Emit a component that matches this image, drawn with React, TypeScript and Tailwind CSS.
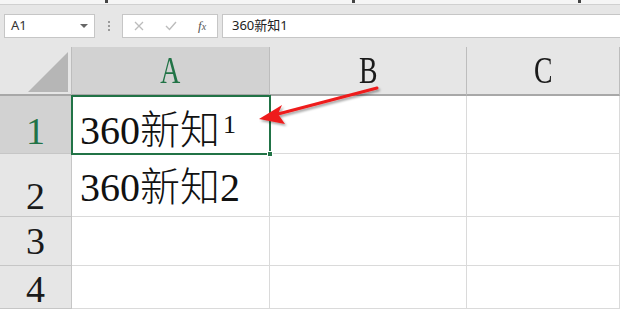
import React from 'react';

const serif = { fontFamily: '"Liberation Serif", "Noto Sans CJK SC", serif' };
const sans = { fontFamily: '"Noto Sans", "Noto Sans CJK SC", sans-serif' };

const RowHead: React.FC<{ n: number; active?: boolean; pb: string }> = ({ n, active, pb }) => (
  <div
    className={`flex items-end justify-center border-r border-b border-[#c6c6c6] text-[38px] leading-none ${pb} ${
      active ? 'bg-[#d2d2d2] text-[#217346]' : 'bg-[#e6e6e6] text-[#1a1a1a]'
    }`}
    style={serif}
  >
    {n}
  </div>
);

const ColHead: React.FC<{ label: string; active?: boolean }> = ({ label, active }) => (
  <div
    className={`flex items-end justify-center pb-[5px] border-r border-[#bdbdbd] border-b-2 border-b-[#a8a8a8] text-[37px] leading-none ${
      active ? 'bg-[#d2d2d2] text-[#217346]' : 'bg-[#e6e6e6] text-[#1a1a1a]'
    }`}
    style={serif}
  >
    <span className="inline-block scale-x-75">{label}</span>
  </div>
);

const Cell: React.FC<{ children?: React.ReactNode; pb?: string }> = ({ children, pb = '' }) => (
  <div className={`flex items-end border-r border-b border-[#dadada] bg-white pl-2 text-[40px] font-light leading-none text-[#111] ${pb}`} style={serif}>
    {children}
  </div>
);

export default function App() {
  return (
    <div className="relative w-[620px] h-[309px] overflow-hidden bg-white">
      {/* toolbar remnant */}
      <div className="relative h-[5px] bg-[#f5f5f5] border-b border-[#d0d0d0]">
        <span className="absolute left-[105px] top-0 h-[3px] w-[3px] bg-[#444]" />
        <span className="absolute left-[352px] top-0 h-[3px] w-[3px] bg-[#444]" />
        <span className="absolute left-[578px] top-0 h-[3px] w-[3px] bg-[#444]" />
      </div>

      {/* formula bar */}
      <div className="flex h-[42px] items-start bg-[#e6e6e6] pt-[9px] pl-1" style={sans}>
        <div className="flex h-6 w-[91px] items-center justify-between border border-[#c6c6c6] bg-white pl-[6px] pr-[6px] text-[13px] text-[#333]">
          <span>A1</span>
          <svg width="8" height="5" viewBox="0 0 8 5">
            <path d="M0 0 L8 0 L4 4 Z" fill="#666" />
          </svg>
        </div>
        <div className="flex h-6 w-[27px] flex-col items-center justify-center gap-[2px]">
          <span className="h-[2px] w-[2px] bg-[#9a9a9a]" />
          <span className="h-[2px] w-[2px] bg-[#9a9a9a]" />
          <span className="h-[2px] w-[2px] bg-[#9a9a9a]" />
        </div>
        <div className="flex h-6 w-[96px] items-center border border-[#c6c6c6] bg-white">
          <svg className="ml-[11px]" width="10" height="10" viewBox="0 0 10 10">
            <path d="M1 1 L9 9 M9 1 L1 9" stroke="#bcbcbc" strokeWidth="1.3" />
          </svg>
          <svg className="ml-[21px]" width="12" height="10" viewBox="0 0 12 10">
            <path d="M1 5 L4.5 8.5 L11 1" stroke="#bcbcbc" strokeWidth="1.4" fill="none" />
          </svg>
          <span className="ml-[21px] text-[13px] italic text-[#555]" style={serif}>
            f<span className="text-[10px]">x</span>
          </span>
        </div>
        <div className="ml-1 flex h-6 flex-1 items-center border border-r-0 border-[#c6c6c6] bg-white pl-[9px] text-[13px] text-[#222]">
          360新知1
        </div>
      </div>

      {/* sheet grid */}
      <div className="grid grid-cols-[72px_198px_197px_1fr] grid-rows-[49px_58px_63px_49px_1fr] h-[262px]">
        <div className="relative border-r border-[#bdbdbd] border-b-2 border-b-[#a8a8a8] bg-[#e6e6e6]">
          <svg className="absolute right-[3px] bottom-[2px]" width="40" height="40" viewBox="0 0 40 40">
            <path d="M40 0 L40 40 L0 40 Z" fill="#b6b6b6" />
          </svg>
        </div>
        <ColHead label="A" active />
        <ColHead label="B" />
        <ColHead label="C" />

        <RowHead n={1} active pb="pb-[3px]" />
        <div className="relative flex items-end bg-white pl-2 pb-[3px] text-[40px] font-light leading-none text-[#111]" style={serif}>
          <span>360新知</span>
          <span className="mb-[13px] ml-[3px] text-[26px] leading-none">1</span>
          <div className="absolute -top-px -left-px -right-px -bottom-px border-2 border-[#217346]" />
          <div className="absolute -right-[3px] -bottom-[3px] h-[6px] w-[6px] border border-white bg-[#217346]" />
        </div>
        <Cell />
        <Cell />

        <RowHead n={2} pb="pb-[1px]" />
        <Cell pb="pb-[8px]">360新知2</Cell>
        <Cell />
        <Cell />

        <RowHead n={3} pb="pb-[5px]" />
        <Cell />
        <Cell />
        <Cell />

        <RowHead n={4} pb="pb-0" />
        <Cell />
        <Cell />
        <Cell />
      </div>

      {/* annotation arrow */}
      <svg className="pointer-events-none absolute left-0 top-0" width="620" height="309" viewBox="0 0 620 309">
        <defs>
          <filter id="sh" x="-20%" y="-20%" width="140%" height="140%">
            <feDropShadow dx="1.5" dy="2" stdDeviation="1.2" floodColor="#000" floodOpacity="0.35" />
          </filter>
        </defs>
        <g filter="url(#sh)">
          <path d="M377 88 L278 114" stroke="#ee1c1c" strokeWidth="3" strokeLinecap="round" />
          <path d="M259 119 L282 105 L278 114 L285 124 Z" fill="#ee1c1c" />
        </g>
      </svg>
    </div>
  );
}
